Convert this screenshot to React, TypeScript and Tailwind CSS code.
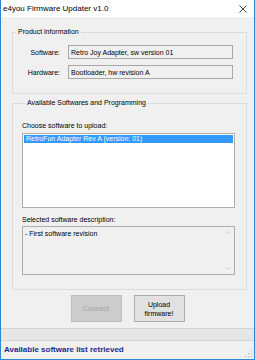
import React from "react";

const font = { fontFamily: '"Liberation Sans", Arial, sans-serif' };

const App: React.FC = () => {
  return (
    <div
      className="w-[255px] h-[360px] flex flex-col bg-[#f0f0f0] border-x border-b border-[#2b86d4] text-[#000] overflow-hidden"
      style={font}
    >
      {/* Title bar */}
      <div className="h-[17px] bg-white flex items-center justify-between pl-[2px] pr-[7px]">
        <span className="text-[8px] leading-none text-[#000]">e4you Firmware Updater v1.0</span>
        <svg width="8" height="8" viewBox="0 0 8 8" className="mt-[1px]">
          <path d="M0.5 0.5 L7.5 7.5 M7.5 0.5 L0.5 7.5" stroke="#333" strokeWidth="0.9" />
        </svg>
      </div>

      {/* Product information */}
      <fieldset className="ml-[11px] w-[235px] mt-[10px] border border-[#dcdcdc] px-0 pb-[14px] pt-[8px]">
        <legend className="ml-[3px] px-[2px] text-[7px] leading-[10px] text-[#000]">Product information</legend>
        <div className="flex flex-col gap-[6px]">
          <div className="flex items-center">
            <span className="w-[47px] text-right text-[7px] leading-none">Software:</span>
            <div className="ml-[8px] w-[165px] h-[14px] border border-[#a8a8a8] bg-[#f0f0f0] flex items-center pl-[2px] text-[7px] leading-none">
              Retro Joy Adapter, sw version 01
            </div>
          </div>
          <div className="flex items-center">
            <span className="w-[47px] text-right text-[7px] leading-none">Hardware:</span>
            <div className="ml-[8px] w-[165px] h-[14px] border border-[#a8a8a8] bg-[#f0f0f0] flex items-center pl-[2px] text-[7px] leading-none">
              Bootloader, hw revision A
            </div>
          </div>
        </div>
      </fieldset>

      {/* Available Softwares and Programming */}
      <fieldset className="ml-[11px] w-[235px] mt-[4px] border border-[#dcdcdc] pl-[9px] pr-[11px] pt-[13px] pb-[14px]">
        <legend className="ml-[3px] px-[2px] text-[7px] leading-[10px]">Available Softwares and Programming</legend>
        <div className="text-[7px] leading-[10px]">Choose software to upload:</div>
        <div className="mt-[2px] w-[213px] h-[75px] border border-[#adadad] bg-white p-[1px]">
          <div className="h-[8px] bg-[#3399ff] text-white text-[7px] leading-[8px] pl-[2px]">
            RetroFun Adapter Rev A (version: 01)
          </div>
        </div>
        <div className="mt-[7px] text-[7px] leading-[10px]">Selected software description:</div>
        <div className="mt-[1px] w-[213px] h-[49px] border border-[#adadad] bg-[#f0f0f0] flex">
          <div className="flex-1 pl-[2px] pt-[2px] text-[7px] leading-[9px]">- First software revision</div>
          <div className="w-[12px] flex flex-col justify-between items-center py-[4px]">
            <svg width="5" height="3" viewBox="0 0 5 3">
              <path d="M0.5 2.5 L2.5 0.5 L4.5 2.5" fill="none" stroke="#c2c2c2" strokeWidth="0.8" />
            </svg>
            <svg width="5" height="3" viewBox="0 0 5 3">
              <path d="M0.5 0.5 L2.5 2.5 L4.5 0.5" fill="none" stroke="#c2c2c2" strokeWidth="0.8" />
            </svg>
          </div>
        </div>
      </fieldset>

      {/* Buttons */}
      <div className="mt-[5px] flex justify-center gap-[12px]">
        <button className="w-[51px] h-[27px] bg-[#cccccc] border border-[#bfbfbf] text-[#a3a3a3] text-[7px] leading-[9px]">
          Connect
        </button>
        <button className="w-[51px] h-[27px] bg-[#e1e1e1] border border-[#adadad] text-[#000] text-[7px] leading-[9px]">
          Upload
          <br />
          firmware!
        </button>
      </div>

      {/* Progress bar */}
      <div className="mt-[6px] h-[13px] bg-[#e6e6e6] border-y border-[#d4d4d4]" />

      {/* Status strip */}
      <div className="flex-1 flex items-center justify-between pl-[3px] pr-[1px]">
        <span className="text-[8px] font-bold text-[#1e2a8a] leading-none">Available software list retrieved</span>
        <svg width="8" height="8" viewBox="0 0 8 8" className="self-end mb-[1px]">
          <rect x="6" y="0" width="1.2" height="1.2" fill="#b8b8b8" />
          <rect x="3" y="3" width="1.2" height="1.2" fill="#b8b8b8" />
          <rect x="6" y="3" width="1.2" height="1.2" fill="#b8b8b8" />
          <rect x="0" y="6" width="1.2" height="1.2" fill="#b8b8b8" />
          <rect x="3" y="6" width="1.2" height="1.2" fill="#b8b8b8" />
          <rect x="6" y="6" width="1.2" height="1.2" fill="#b8b8b8" />
        </svg>
      </div>
    </div>
  );
};

export default App;
